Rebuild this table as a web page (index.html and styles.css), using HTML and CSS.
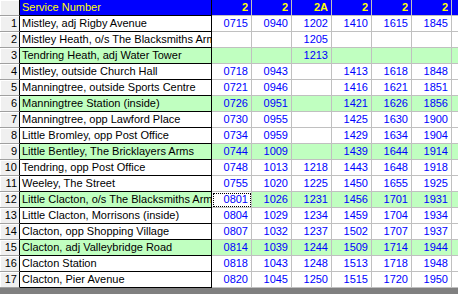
FILE: index.html
```html
<!DOCTYPE html>
<html>
<head>
<meta charset="utf-8">
<link rel="stylesheet" href="styles.css">
</head>
<body>
<div class="grid">
  <div class="fx"></div><div class="hd name">Service Number</div><div class="hd num">2</div><div class="hd num">2</div><div class="hd num">2A</div><div class="hd num">2</div><div class="hd num">2</div><div class="hd num">2</div><div class="hd num"></div>

  <div class="fx">1</div><div class="nm">Mistley, adj Rigby Avenue</div><div class="t">0715</div><div class="t">0940</div><div class="t">1202</div><div class="t">1410</div><div class="t">1615</div><div class="t">1845</div><div class="t"></div>
  <div class="fx">2</div><div class="nm">Mistley Heath, o/s The Blacksmiths Arms</div><div class="t"></div><div class="t"></div><div class="t">1205</div><div class="t"></div><div class="t"></div><div class="t"></div><div class="t"></div>
  <div class="fx">3</div><div class="nm g">Tendring Heath, adj Water Tower</div><div class="t g"></div><div class="t g"></div><div class="t g">1213</div><div class="t g"></div><div class="t g"></div><div class="t g"></div><div class="t g"></div>
  <div class="fx">4</div><div class="nm">Mistley, outside Church Hall</div><div class="t">0718</div><div class="t">0943</div><div class="t"></div><div class="t">1413</div><div class="t">1618</div><div class="t">1848</div><div class="t"></div>
  <div class="fx">5</div><div class="nm">Manningtree, outside Sports Centre</div><div class="t">0721</div><div class="t">0946</div><div class="t"></div><div class="t">1416</div><div class="t">1621</div><div class="t">1851</div><div class="t"></div>
  <div class="fx">6</div><div class="nm g">Manningtree Station (inside)</div><div class="t g">0726</div><div class="t g">0951</div><div class="t g"></div><div class="t g">1421</div><div class="t g">1626</div><div class="t g">1856</div><div class="t g"></div>
  <div class="fx">7</div><div class="nm">Manningtree, opp Lawford Place</div><div class="t">0730</div><div class="t">0955</div><div class="t"></div><div class="t">1425</div><div class="t">1630</div><div class="t">1900</div><div class="t"></div>
  <div class="fx">8</div><div class="nm">Little Bromley, opp Post Office</div><div class="t">0734</div><div class="t">0959</div><div class="t"></div><div class="t">1429</div><div class="t">1634</div><div class="t">1904</div><div class="t"></div>
  <div class="fx">9</div><div class="nm g">Little Bentley, The Bricklayers Arms</div><div class="t g">0744</div><div class="t g">1009</div><div class="t g"></div><div class="t g">1439</div><div class="t g">1644</div><div class="t g">1914</div><div class="t g"></div>
  <div class="fx">10</div><div class="nm">Tendring, opp Post Office</div><div class="t">0748</div><div class="t">1013</div><div class="t">1218</div><div class="t">1443</div><div class="t">1648</div><div class="t">1918</div><div class="t"></div>
  <div class="fx">11</div><div class="nm">Weeley, The Street</div><div class="t">0755</div><div class="t">1020</div><div class="t">1225</div><div class="t">1450</div><div class="t">1655</div><div class="t">1925</div><div class="t"></div>
  <div class="fx">12</div><div class="nm g">Little Clacton, o/s The Blacksmiths Arms</div><div class="t sel">0801</div><div class="t g">1026</div><div class="t g">1231</div><div class="t g">1456</div><div class="t g">1701</div><div class="t g">1931</div><div class="t g"></div>
  <div class="fx">13</div><div class="nm">Little Clacton, Morrisons (inside)</div><div class="t">0804</div><div class="t">1029</div><div class="t">1234</div><div class="t">1459</div><div class="t">1704</div><div class="t">1934</div><div class="t"></div>
  <div class="fx">14</div><div class="nm">Clacton, opp Shopping Village</div><div class="t">0807</div><div class="t">1032</div><div class="t">1237</div><div class="t">1502</div><div class="t">1707</div><div class="t">1937</div><div class="t"></div>
  <div class="fx">15</div><div class="nm g">Clacton, adj Valleybridge Road</div><div class="t g">0814</div><div class="t g">1039</div><div class="t g">1244</div><div class="t g">1509</div><div class="t g">1714</div><div class="t g">1944</div><div class="t g"></div>
  <div class="fx">16</div><div class="nm">Clacton Station</div><div class="t">0818</div><div class="t">1043</div><div class="t">1248</div><div class="t">1513</div><div class="t">1718</div><div class="t">1948</div><div class="t"></div>
  <div class="fx">17</div><div class="nm">Clacton, Pier Avenue</div><div class="t">0820</div><div class="t">1045</div><div class="t">1250</div><div class="t">1515</div><div class="t">1720</div><div class="t">1950</div><div class="t"></div>
</div>
</body>
</html>
```
FILE: styles.css
```css
html, body {
  margin: 0;
  padding: 0;
  background: #808080;
  overflow: hidden;
  width: 458px;
  height: 294px;
}
.grid {
  display: grid;
  grid-template-columns: 20px 192px repeat(7, 40px);
  grid-auto-rows: 16px;
  width: 492px;
  font-family: "Liberation Sans", Arial, sans-serif;
  font-size: 11px;
  line-height: 15px;
  background: #ffffff;
}
.grid > div {
  box-sizing: border-box;
  white-space: nowrap;
  overflow: hidden;
  border-right: 1px solid #c0c0c0;
  border-bottom: 1px solid #c0c0c0;
}
.fx {
  background: #f0f0f0;
  color: #000;
  text-align: right;
  padding-right: 2px;
  border-right: 1px solid #000 !important;
  border-bottom: 1px solid #a0a0a0 !important;
  box-shadow: inset 1px 1px 0 #ffffff;
}
.hd {
  background: #0000ff;
  color: #ffff00;
}
.hd.name {
  padding-left: 2px;
  border-right: 1px solid #000 !important;
  border-bottom: 1px solid #000 !important;
}
.hd.num {
  font-weight: bold;
  text-align: right;
  padding-right: 3px;
}
.nm {
  color: #000;
  padding-left: 2px;
  background: #ffffff;
  border-right: 1px solid #000 !important;
  border-bottom: 1px solid #000 !important;
}
.t {
  color: #0000ff;
  text-align: right;
  padding-right: 3px;
  background: #ffffff;
}
.g {
  background: #c0ffc0;
}
.sel {
  background: #ffffff;
  outline: 1px dotted #000;
  outline-offset: -2px;
}
```
